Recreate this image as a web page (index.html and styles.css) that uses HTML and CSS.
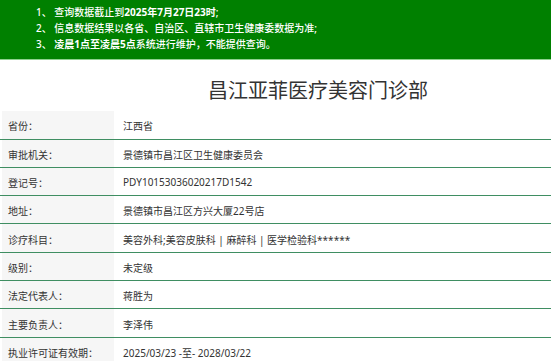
FILE: index.html
```html
<!DOCTYPE html>
<html lang="zh-CN">
<head>
<meta charset="utf-8">
<title>昌江亚菲医疗美容门诊部</title>
<link rel="stylesheet" href="styles.css">
</head>
<body>
<div class="page">
  <div class="notice">
    <p>1、 查询数据截止到<b>2025年7月27日23时</b>;</p>
    <p>2、 信息数据结果以各省、自治区、直辖市卫生健康委数据为准;</p>
    <p>3、 <b>凌晨1点至凌晨5点</b>系统进行维护，不能提供查询。</p>
  </div>
  <h1 class="title">昌江亚菲医疗美容门诊部</h1>
  <div class="info">
    <div class="row"><div class="label">省份：</div><div class="value">江西省</div></div>
    <div class="row"><div class="label">审批机关：</div><div class="value">景德镇市昌江区卫生健康委员会</div></div>
    <div class="row"><div class="label">登记号：</div><div class="value">PDY10153036020217D1542</div></div>
    <div class="row"><div class="label">地址：</div><div class="value">景德镇市昌江区方兴大厦22号店</div></div>
    <div class="row"><div class="label">诊疗科目：</div><div class="value">美容外科;美容皮肤科 | 麻醉科 | 医学检验科******</div></div>
    <div class="row"><div class="label">级别：</div><div class="value">未定级</div></div>
    <div class="row"><div class="label">法定代表人：</div><div class="value">蒋胜为</div></div>
    <div class="row"><div class="label">主要负责人：</div><div class="value">李泽伟</div></div>
    <div class="row"><div class="label">执业许可证有效期：</div><div class="value">2025/03/23 -至- 2028/03/22</div></div>
  </div>
</div>
</body>
</html>
```

FILE: styles.css
```css
html, body {
  margin: 0;
  padding: 0;
  background: #fff;
}
body {
  font-family: "Noto Sans", "Noto Sans CJK SC", sans-serif;
  color: #333;
  font-size: 10px;
}
.page {
  display: flex;
  flex-direction: column;
}
.notice {
  background: #008000;
  color: #fff;
  padding: 4px 0 7px 36px;
  height: 48px;
  border-bottom: 1px solid #8fd08f;
}
.notice p {
  margin: 0;
  line-height: 16px;
  font-size: 10px;
  font-weight: 500;
}
.notice b {
  font-weight: 700;
}
.title {
  margin: 0;
  height: 51px;
  line-height: 60px;
  padding-left: 85px;
  text-align: center;
  font-size: 20px;
  font-weight: 400;
  color: #333;
  font-family: "Noto Sans CJK SC", sans-serif;
}
.info {
  display: flex;
  flex-direction: column;
}
.row {
  display: flex;
  height: 28.33px;
  box-sizing: border-box;
  border-bottom: 1px solid #3f8e62;
}
.row:first-child {
  height: 28.5px;
}
.row:last-child {
  border-bottom: none;
}
.label {
  margin-left: 2px;
  width: 106px;
  padding-left: 6px;
  background: #f6f6f6;
  display: flex;
  align-items: center;
  padding-top: 2px;
}
.value {
  flex: 1;
  padding-left: 9px;
  display: flex;
  align-items: center;
  padding-top: 2px;
  background: #fff;
}
```
